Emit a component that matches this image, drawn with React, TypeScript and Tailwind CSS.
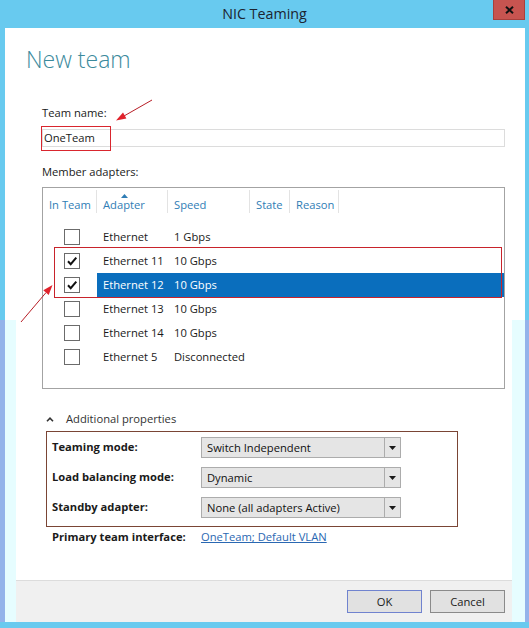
import React from "react";

type Row = { name: string; speed: string; checked: boolean; selected: boolean };

const rows: Row[] = [
  { name: "Ethernet", speed: "1 Gbps", checked: false, selected: false },
  { name: "Ethernet 11", speed: "10 Gbps", checked: true, selected: false },
  { name: "Ethernet 12", speed: "10 Gbps", checked: true, selected: true },
  { name: "Ethernet 13", speed: "10 Gbps", checked: false, selected: false },
  { name: "Ethernet 14", speed: "10 Gbps", checked: false, selected: false },
  { name: "Ethernet 5", speed: "Disconnected", checked: false, selected: false },
];

const headers: { label: string; cls: string }[] = [
  { label: "In Team", cls: "w-[54px]" },
  { label: "Adapter", cls: "w-[71px]" },
  { label: "Speed", cls: "w-[82px]" },
  { label: "State", cls: "w-[40px]" },
  { label: "Reason", cls: "w-[49px]" },
];

function Checkbox({ checked }: { checked: boolean }) {
  return (
    <div className="w-[16px] h-[16px] border border-[#6b6b6b] bg-white flex items-center justify-center">
      {checked && (
        <svg width="12" height="12" viewBox="0 0 12 12">
          <path d="M2 6.3 L4.7 9.2 L10.3 2.6" fill="none" stroke="#111" strokeWidth="2" />
        </svg>
      )}
    </div>
  );
}

function Select({ value }: { value: string }) {
  return (
    <div className="h-[21px] w-[200px] border border-[#acacac] bg-[#e5e5e5] flex">
      <div className="flex-1 pl-[5px] leading-[19px] text-[#111]">{value}</div>
      <div className="w-[16px] border-l border-[#acacac] flex items-center justify-center">
        <svg width="7" height="4" viewBox="0 0 7 4">
          <path d="M0 0H7L3.5 4Z" fill="#1a1a1a" />
        </svg>
      </div>
    </div>
  );
}

export default function App() {
  return (
    <div className="relative w-[529px] h-[628px] bg-[#68caef] flex flex-col overflow-hidden font-['Open_Sans','Noto_Sans',sans-serif] text-[11.2px] text-[#1a1a1a]">
      {/* Title bar */}
      <div className="relative h-[28px] flex items-center justify-center">
        <span className="text-[14.3px] leading-[28px] text-[#1c2430]">NIC Teaming</span>
        <div className="absolute right-[4px] top-0 w-[32px] h-[20px] bg-[#c75450] border border-[#a8403c] border-t-0 flex items-center justify-center">
          <svg width="9" height="8" viewBox="0 0 9 8">
            <path d="M1 0.8 L8 7.2 M8 0.8 L1 7.2" stroke="#111" strokeWidth="2" />
          </svg>
        </div>
      </div>

      {/* Window body */}
      <div className="flex-1 ml-[5px] mr-[4px] mb-[6px] bg-white flex flex-col">
        <div className="flex-1 flex flex-col pt-[15px]">
          <div className="pl-[21px] text-[23px] leading-[32px] font-light text-[#3b8a9c]">New team</div>

          <div className="pl-[37px] pr-[20px] flex flex-col">
            <div className="mt-[30px] leading-[16px]">Team name:</div>
            <div className="mt-[8px] h-[18px] border border-[#dcdcdc] pl-[1px] leading-[16px]">OneTeam</div>

            <div className="mt-[17px] leading-[16px]">Member adapters:</div>
            <div className="mt-[7px] h-[202px] border border-[#a3a3a3] flex flex-col">
              <div className="h-[37px] flex items-start">
                {headers.map((h) => (
                  <div
                    key={h.label}
                    className={`${h.cls} relative mt-[2px] h-[23px] border-r border-[#e3e3e3] pt-[7px] pl-[6px] leading-[16px] text-[#2f7db5]`}
                  >
                    {h.label === "Adapter" && (
                      <svg className="absolute left-[24px] top-[4px]" width="7" height="4" viewBox="0 0 7 4">
                        <path d="M0 4H7L3.5 0Z" fill="#2f7db5" />
                      </svg>
                    )}
                    {h.label}
                  </div>
                ))}
              </div>
              {rows.map((r) => (
                <div key={r.name} className="h-[24px] flex items-center">
                  <div className="w-[54px] pl-[21px] flex items-center">
                    <Checkbox checked={r.checked} />
                  </div>
                  <div
                    className={`flex-1 h-full flex items-center ${r.selected ? "bg-[#0a6ebd] text-white" : ""}`}
                  >
                    <div className="w-[71px] pl-[6px] leading-[16px]">{r.name}</div>
                    <div className="pl-[6px] leading-[16px]">{r.speed}</div>
                  </div>
                </div>
              ))}
            </div>

            <div className="mt-[22px] flex items-center leading-[16px]">
              <svg className="ml-[4px]" width="8" height="5" viewBox="0 0 8 5">
                <path d="M1 4.2 L4 1.2 L7 4.2" fill="none" stroke="#333" strokeWidth="1.6" />
              </svg>
              <span className="ml-[12px] text-[#333]">Additional properties</span>
            </div>

            <div className="mt-[4px] ml-[4px] w-[412px] border border-[#7a4535] pt-[5px] pb-[8px] pl-[5px] flex flex-col gap-[9px]">
              <div className="h-[21px] flex items-center">
                <div className="w-[149px] font-bold">Teaming mode:</div>
                <Select value="Switch Independent" />
              </div>
              <div className="h-[21px] flex items-center">
                <div className="w-[149px] font-bold">Load balancing mode:</div>
                <Select value="Dynamic" />
              </div>
              <div className="h-[21px] flex items-center">
                <div className="w-[149px] font-bold">Standby adapter:</div>
                <Select value="None (all adapters Active)" />
              </div>
            </div>

            <div className="mt-[2px] pl-[10px] flex leading-[16px]">
              <div className="w-[149px] font-bold">Primary team interface:</div>
              <span className="text-[#2a68b2] underline">OneTeam; Default VLAN</span>
            </div>
          </div>
        </div>

        {/* Footer */}
        <div className="h-[42px] border-t border-[#dcdcdc] bg-[#f0f0f0] flex justify-end items-start pt-[9px] pr-[20px] gap-[8px]">
          <div className="w-[75px] h-[23px] border border-[#7083cf] bg-[#e1e1e1] flex items-center justify-center leading-[21px]">
            OK
          </div>
          <div className="w-[75px] h-[23px] border border-[#8a8a8a] bg-[#e1e1e1] flex items-center justify-center leading-[21px]">
            Cancel
          </div>
        </div>
      </div>

      {/* Frame tint (lower part) */}
      <div className="absolute left-0 top-[320px] w-[5px] h-[302px] bg-[#93b3ea]" />
      <div className="absolute left-[5px] top-[320px] w-[11px] h-[302px] bg-[#e6fdff]" />
      <div className="absolute left-[512px] top-[320px] w-[13px] h-[302px] bg-[#e6fdff]" />
      <div className="absolute left-[525px] top-[320px] w-[4px] h-[302px] bg-[#93b3ea]" />

      {/* Red annotations */}
      <svg className="absolute left-0 top-0 pointer-events-none" width="529" height="628" viewBox="0 0 529 628">
        <rect x="41.5" y="126.5" width="69" height="24" fill="none" stroke="#d9262e" strokeWidth="1" />
        <rect x="54.5" y="247.5" width="447" height="50" fill="none" stroke="#c8232b" strokeWidth="1" />
        <line x1="152" y1="100" x2="124" y2="116" stroke="#b81e26" strokeWidth="1" />
        <polygon points="116,120.5 126.4,118.6 123,112.5" fill="#e0222b" />
        <line x1="21" y1="322" x2="46" y2="292.6" stroke="#b81e26" strokeWidth="1" />
        <polygon points="52.5,285 48.7,294.9 43.3,290.3" fill="#e0222b" />
      </svg>
    </div>
  );
}
